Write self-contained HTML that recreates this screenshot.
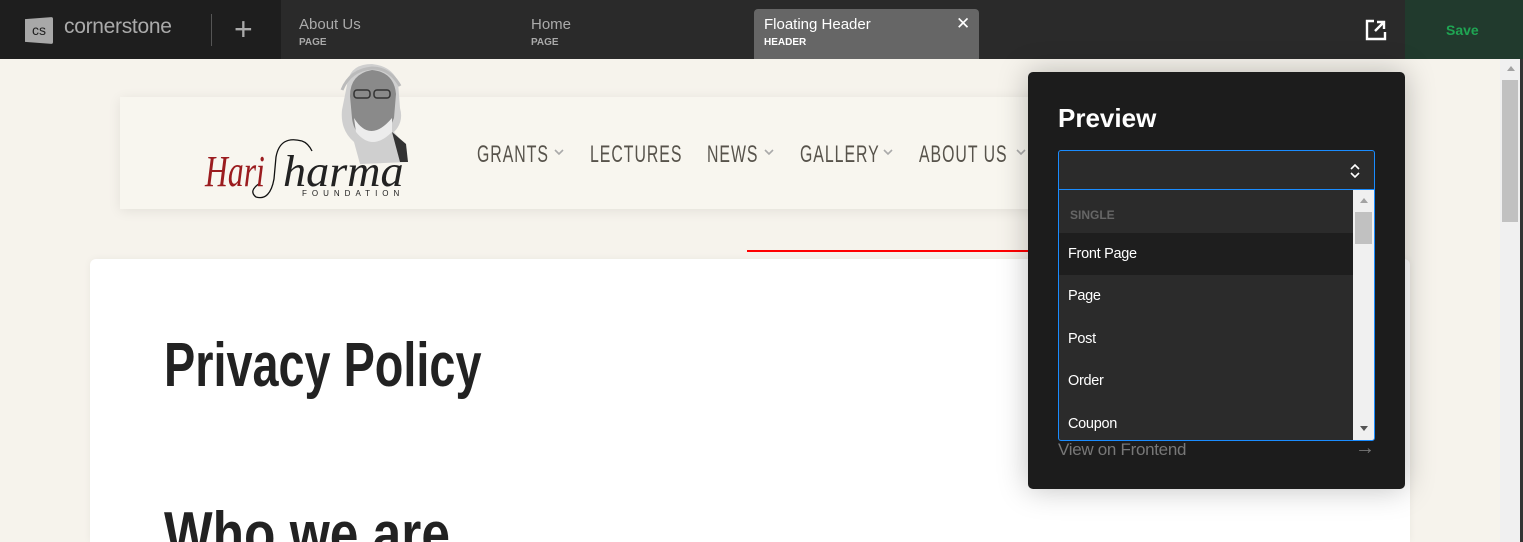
<!DOCTYPE html><html><head><style>
*{margin:0;padding:0;box-sizing:border-box}
html,body{width:1523px;height:542px;overflow:hidden}
body{background:#f6f3ec;font-family:"Liberation Sans",sans-serif;position:relative}
.a{position:absolute}
.n{position:absolute;top:141px;color:#57534b;font-size:24px;transform:scaleX(.66);transform-origin:left top;letter-spacing:1.5px;white-space:nowrap}
.c{position:absolute;top:149px}
.h{position:absolute;color:#222;font-size:62px;font-weight:bold;line-height:70px;transform-origin:left top;white-space:nowrap}
</style></head><body>
<div class="a" style="left:0;top:0;width:1523px;height:59px;background:#2a2a2a"></div>
<div class="a" style="left:0;top:0;width:281px;height:59px;background:#1e1e1e"></div>
<div class="a" style="left:25px;top:17px;width:28px;height:27px;background:#a8a8a8;border-radius:2px;color:#1e1e1e;font-size:14px;line-height:27px;text-align:center;clip-path:polygon(0 8%,100% 0,100% 100%,0 92%)">cs</div>
<div class="a" style="left:64px;top:15px;color:#aaa;font-size:21px;letter-spacing:-.3px">cornerstone</div>
<div class="a" style="left:211px;top:14px;width:1px;height:32px;background:#555"></div>
<div class="a" style="left:234px;top:9px;color:#aaa;font-size:32px;font-weight:300;line-height:40px">+</div>
<div class="a" style="left:299px;top:16px;color:#aaa;font-size:15px">About Us</div>
<div class="a" style="left:299px;top:37px;color:#aaa;font-size:10px;font-weight:bold">PAGE</div>
<div class="a" style="left:531px;top:16px;color:#aaa;font-size:15px">Home</div>
<div class="a" style="left:531px;top:37px;color:#aaa;font-size:10px;font-weight:bold">PAGE</div>
<div class="a" style="left:754px;top:9px;width:225px;height:50px;background:#666;border-radius:4px 4px 0 0"></div>
<div class="a" style="left:764px;top:16px;color:#fff;font-size:15px">Floating Header</div>
<div class="a" style="left:764px;top:37px;color:#fff;font-size:10px;font-weight:bold">HEADER</div>
<div class="a" style="left:956px;top:14px;color:#fff;font-size:17px">✕</div>
<svg class="a" style="left:1365px;top:19px" width="22" height="22" viewBox="0 0 22 22"><path d="M9 2H2v18h18v-7" fill="none" stroke="#fff" stroke-width="2.4"/><path d="M10 12l9-9M12 3h7v7" fill="none" stroke="#fff" stroke-width="2.4"/></svg>
<div class="a" style="left:1405px;top:0;width:118px;height:59px;background:#213a2d"></div>
<div class="a" style="left:1446px;top:22px;color:#1fa553;font-size:14px;font-weight:bold">Save</div>
<!-- page -->
<div class="a" style="left:1500px;top:59px;width:20px;height:483px;background:#f0f0f0"></div>
<div class="a" style="left:1502px;top:80px;width:16px;height:142px;background:#c1c1c1"></div>
<div class="a" style="left:1507px;top:66px;border:4px solid transparent;border-bottom:5px solid #a3a3a3;border-top:0"></div>
<div class="a" style="left:1520px;top:59px;width:3px;height:483px;background:#333"></div>
<div class="a" style="left:120px;top:97px;width:920px;height:112px;background:#f8f6ef;box-shadow:0 2px 12px rgba(0,0,0,.08)"></div>
<!-- logo -->
<svg class="a" style="left:320px;top:60px" width="100" height="105" viewBox="0 0 100 105">
<path d="M28 20 Q32 4 52 4 Q72 6 78 22 L80 48 Q84 62 74 72 L84 84 L88 102 L40 104 L34 82 Q20 70 22 50 Z" fill="#cfcfcf"/>
<path d="M30 36 Q30 14 52 10 Q74 12 76 34 L74 58 Q66 80 50 80 Q34 76 32 58 Z" fill="#8a8a8a"/>
<path d="M34 58 Q50 84 72 58 L72 72 Q52 92 36 72 Z" fill="#ececec"/>
<path d="M72 72 L86 84 L88 102 L80 102 Z" fill="#333"/>
<path d="M22 30 Q30 10 52 8 Q70 8 80 26" fill="none" stroke="#bbb" stroke-width="3"/>
<rect x="34" y="30" width="16" height="8" rx="3" fill="none" stroke="#333" stroke-width="1.5"/><rect x="54" y="30" width="16" height="8" rx="3" fill="none" stroke="#333" stroke-width="1.5"/>
</svg>
<svg class="a" style="left:250px;top:135px" width="80" height="70" viewBox="0 0 80 70"><path d="M52 6 Q30 0 26 22 L24 44 Q20 66 6 62 Q-2 56 10 48" fill="none" stroke="#111" stroke-width="1.3"/><path d="M52 6 Q58 8 62 16" fill="none" stroke="#111" stroke-width="1.3"/></svg>
<div class="a" style="left:205px;top:150px;color:#9b1c1f;font-family:'Liberation Serif',serif;font-style:italic;font-size:44px;line-height:44px;transform:scaleX(.72);transform-origin:left top">Hari</div>
<div class="a" style="left:283px;top:150px;color:#222;font-family:'Liberation Serif',serif;font-style:italic;font-size:44px;line-height:44px;transform:scaleX(1.05);transform-origin:left top">harma</div>
<div class="a" style="left:302px;top:189px;color:#222;font-size:8px;letter-spacing:5px">FOUNDATION</div>
<div class="n" style="left:477px">GRANTS</div>
<div class="n" style="left:590px">LECTURES</div>
<div class="n" style="left:707px">NEWS</div>
<div class="n" style="left:800px">GALLERY</div>
<div class="n" style="left:919px">ABOUT US</div>
<svg class="a" style="left:554px;top:148px" width="10" height="8"><path d="M1 2l4 4 4-4" fill="none" stroke="#aaa" stroke-width="1.6"/></svg>
<svg class="a" style="left:764px;top:148px" width="10" height="8"><path d="M1 2l4 4 4-4" fill="none" stroke="#aaa" stroke-width="1.6"/></svg>
<svg class="a" style="left:883px;top:148px" width="10" height="8"><path d="M1 2l4 4 4-4" fill="none" stroke="#aaa" stroke-width="1.6"/></svg>
<svg class="a" style="left:1016px;top:148px" width="10" height="8"><path d="M1 2l4 4 4-4" fill="none" stroke="#aaa" stroke-width="1.6"/></svg>
<div class="a" style="left:90px;top:259px;width:1320px;height:283px;background:#fff;border-radius:6px 6px 0 0;box-shadow:0 0 8px rgba(0,0,0,.05)"></div>
<div class="h" style="left:164px;top:331px;transform:scaleX(.755)">Privacy Policy</div>
<div class="h" style="left:164px;top:500px;transform:scaleX(.83)">Who we are</div>
<div class="a" style="left:747px;top:250px;width:285px;height:2px;background:#f00"></div>
<div class="a" style="left:1030px;top:246px;border-left:12px solid #f00;border-top:5px solid transparent;border-bottom:5px solid transparent"></div>
<!-- panel -->
<div class="a" style="left:1028px;top:72px;width:377px;height:417px;background:#1c1c1c;border-radius:5px;box-shadow:0 0 30px rgba(0,0,0,.25)"></div>
<div class="a" style="left:1058px;top:103px;color:#fff;font-size:26px;font-weight:bold">Preview</div>
<div class="a" style="left:1058px;top:150px;width:317px;height:291px;border:1px solid #1a8cff;border-radius:3px;background:#2b2b2b;overflow:hidden">
 <div class="a" style="left:0;top:38px;width:317px;height:1px;background:#1a8cff"></div>
 <svg class="a" style="left:289px;top:12px" width="14" height="16"><path d="M3 6l4-4 4 4M3 10l4 4 4-4" fill="none" stroke="#fff" stroke-width="1.6"/></svg>
 <div class="a" style="left:11px;top:57px;color:#666;font-size:12px;font-weight:bold">SINGLE</div>
 <div class="a" style="left:0;top:82px;width:294px;height:42px;background:#1e1e1e"></div>
 <div class="a" style="left:9px;top:95px;color:#fff;font-size:14.5px;letter-spacing:-.3px">Front Page</div>
 <div class="a" style="left:9px;top:137px;color:#fff;font-size:14.5px;letter-spacing:-.3px">Page</div>
 <div class="a" style="left:9px;top:180px;color:#fff;font-size:14.5px;letter-spacing:-.3px">Post</div>
 <div class="a" style="left:9px;top:222px;color:#fff;font-size:14.5px;letter-spacing:-.3px">Order</div>
 <div class="a" style="left:9px;top:265px;color:#fff;font-size:14.5px;letter-spacing:-.3px">Coupon</div>
 <div class="a" style="left:294px;top:39px;width:22px;height:252px;background:#f0f0f0"></div>
 <div class="a" style="left:296px;top:61px;width:17px;height:32px;background:#c1c1c1"></div>
 <div class="a" style="left:301px;top:47px;border:4px solid transparent;border-bottom:5px solid #a3a3a3;border-top:0"></div>
 <div class="a" style="left:301px;top:275px;border:4px solid transparent;border-top:5px solid #555;border-bottom:0"></div>
</div>
<div class="a" style="left:1058px;top:440px;color:#777;font-size:17px;letter-spacing:-.3px">View on Frontend</div>
<div class="a" style="left:1355px;top:437px;color:#777;font-size:20px">→</div>
</body></html>
